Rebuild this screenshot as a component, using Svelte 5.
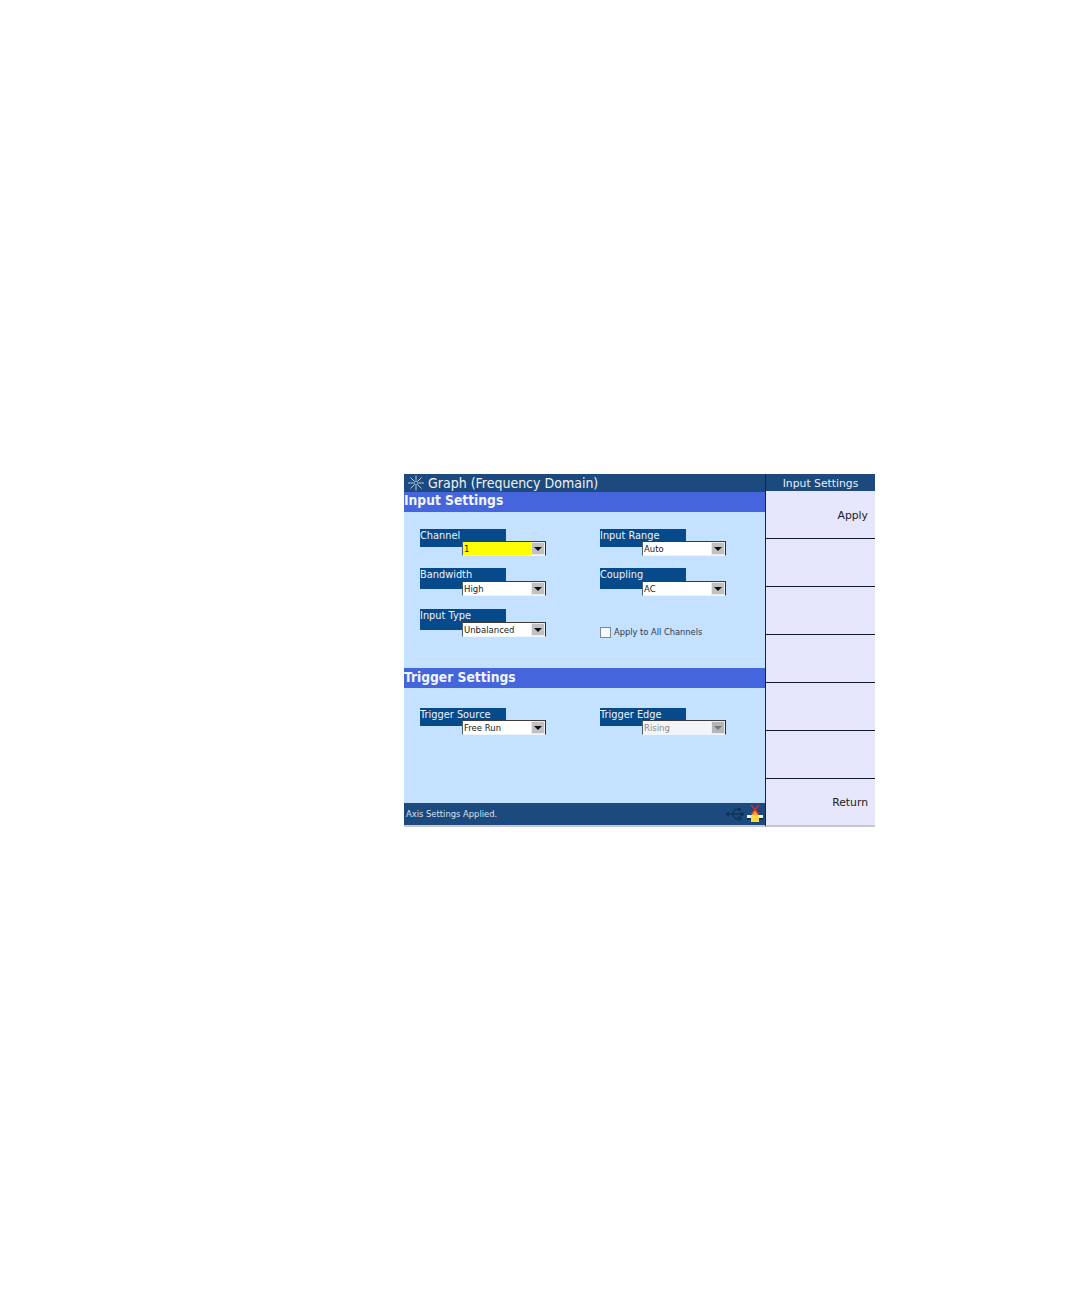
<script lang="ts">
  const softkeys = ["Apply", "", "", "", "", "", "Return"];
</script>

{#snippet field(label, value, cls = "")}
  <div class="field {cls}">
    <div class="field-label">{label}</div>
    <div class="combo">
      <span class="combo-value">{value}</span>
      <span class="combo-btn"><i></i></span>
    </div>
  </div>
{/snippet}

<div class="page">
  <div class="screen">
    <div class="main">
      <div class="titlebar">
        <svg class="logo" width="18" height="16" viewBox="0 0 18 16">
          <circle cx="9" cy="8" r="2" fill="#1c4a7e" stroke="#c9d6e6" stroke-width="0.800" />
          <g stroke="#c9d6e6" stroke-width="0.900" fill="none">
            <path d="M9 0.500v5M9 10.500v5M1 8h5.500M11.500 8h5.500M3.500 2.500l3.500 3.500M14.500 2.500l-3.500 3.500M3.500 13.500l3.500-3.500M14.500 13.500l-3.500-3.500" />
          </g>
        </svg>
        <span>Graph (Frequency Domain)</span>
      </div>

      <div class="section-head">Input Settings</div>
      <div class="section input-section">
        <div class="col">
          {@render field("Channel", "1", "active first")}
          {@render field("Bandwidth", "High", "tall")}
          {@render field("Input Type", "Unbalanced", "tall")}
        </div>
        <div class="col">
          {@render field("Input Range", "Auto", "first")}
          {@render field("Coupling", "AC", "tall")}
          <label class="check">
            <span class="box"></span>
            <span>Apply to All Channels</span>
          </label>
        </div>
      </div>

      <div class="section-head trigger-head">Trigger Settings</div>
      <div class="section trigger-section">
        <div class="col">
          {@render field("Trigger Source", "Free Run", "first")}
        </div>
        <div class="col">
          {@render field("Trigger Edge", "Rising", "first disabled")}
        </div>
      </div>

      <div class="statusbar">
        <span class="status-text">Axis Settings Applied.</span>
        <svg class="usb" width="20" height="14" viewBox="0 0 20 14">
          <g fill="none" stroke="#0f3358" stroke-width="1.300">
            <path d="M3 7h13M7 7l3-4.500h3M7 7l3 4.500h2.500" />
            <circle cx="14.500" cy="11.500" r="1.600" />
          </g>
          <circle cx="17" cy="7" r="2" fill="#0f3358" />
          <path d="M0 7l4-2.500v5z" fill="#0f3358" />
          <rect x="13" y="1" width="3" height="3" fill="#0f3358" />
        </svg>
        <svg class="warn" width="18" height="20" viewBox="0 0 18 20">
          <path d="M9 5l4 7H5z" fill="#f0a030" />
          <rect x="1" y="11" width="16" height="3" fill="#f4f4f4" />
          <rect x="1" y="14" width="16" height="1.500" fill="#10263e" />
          <rect x="5" y="11" width="8" height="7" fill="#f6dc3c" />
          <path d="M5 1l8 9M13 1l-8 9" stroke="#c83030" stroke-width="1.600" />
        </svg>
      </div>
      <div class="bottom-edge"></div>
    </div>

    <div class="softkeys">
      <div class="softkeys-head">Input Settings</div>
      {#each softkeys as key}
        <div class="softkey">{key}</div>
      {/each}
    </div>
  </div>
</div>

<style>
  :global(body) {
    margin: 0;
    background: #fff;
  }

  .page {
    height: 1296px;
    box-sizing: border-box;
    padding: 474px 0 0 404px;
    font-family: "DejaVu Sans", Verdana, sans-serif;
  }

  .screen {
    display: flex;
    width: 471px;
    height: 353px;
  }

  .main {
    width: 361px;
    flex: none;
    display: flex;
    flex-direction: column;
    background: #c4e1ff;
  }

  .titlebar {
    height: 18px;
    flex: none;
    display: flex;
    align-items: center;
    gap: 3px;
    padding-left: 3px;
    background: #1c4a7e;
    color: #eef3f8;
    font-size: 14px;
    font-stretch: condensed;
    white-space: nowrap;
  }

  .logo {
    flex: none;
  }

  .section-head {
    height: 20px;
    flex: none;
    background: #4565dc;
    color: #f2f5ff;
    font-size: 13.700px;
    font-stretch: condensed;
    font-weight: 700;
    line-height: 17px;
  }

  .trigger-head {
    line-height: 19px;
  }

  .section {
    display: flex;
    padding-left: 16px;
    flex: none;
  }

  .input-section {
    height: 156px;
    padding-top: 17px;
    box-sizing: border-box;
  }

  .trigger-section {
    height: 115px;
    padding-top: 20px;
    box-sizing: border-box;
  }

  .col {
    width: 180px;
    flex: none;
    display: flex;
    flex-direction: column;
  }

  .field {
    position: relative;
    height: 41px;
  }

  .field.first {
    height: 39px;
  }

  .field-label {
    width: 86px;
    height: 21px;
    box-sizing: border-box;
    background: #064a8c;
    color: #eef4fa;
    font-size: 9.800px;
    line-height: 14px;
    white-space: nowrap;
  }

  .first .field-label {
    height: 18px;
  }

  .combo {
    position: absolute;
    left: 42px;
    top: 13px;
    width: 84px;
    height: 15px;
    box-sizing: border-box;
    display: flex;
    justify-content: space-between;
    background: #fff;
    border-top: 1px solid #3a3a3a;
    border-left: 1px solid #44607c;
    border-right: 1px solid #2c2c2c;
    border-bottom: 1px solid #eef4fb;
    color: #1a1a1a;
    font-size: 8.500px;
    line-height: 14px;
  }

  .first .combo {
    top: 12px;
  }

  .combo-value {
    padding-left: 1px;
  }

  .combo-btn {
    width: 14px;
    flex: none;
    display: flex;
    align-items: center;
    justify-content: center;
    background: #c0c0c0;
    border: 1px solid #ececec;
    box-sizing: border-box;
  }

  .combo-btn i {
    width: 0;
    height: 0;
    border-left: 4px solid transparent;
    border-right: 4px solid transparent;
    border-top: 4px solid #111;
  }

  .active .combo {
    background: linear-gradient(to right, #ffff00 69px, #fff 69px);
  }

  .disabled .combo {
    background: #f2f4f7;
    color: #8a8a8a;
  }

  .disabled .combo-btn {
    background: #b4b6ba;
  }

  .disabled .combo-btn i {
    border-top-color: #777;
  }

  .check {
    display: flex;
    align-items: center;
    gap: 3px;
    height: 16px;
    margin-top: 15px;
    color: #2a3a4a;
    font-size: 8.300px;
    white-space: nowrap;
  }

  .box {
    width: 11px;
    height: 11px;
    flex: none;
    box-sizing: border-box;
    background: #f8f8f8;
    border: 1px solid #7d8894;
  }

  .statusbar {
    height: 22px;
    flex: none;
    display: flex;
    align-items: center;
    padding-left: 2px;
    background: #1c4a7e;
    color: #d6e2ee;
    font-size: 8.400px;
  }

  .status-text {
    flex: 1;
  }

  .usb {
    margin-right: 1px;
  }

  .warn {
    margin-right: 1px;
  }

  .bottom-edge {
    height: 2px;
    flex: none;
    margin-top: auto;
    background: #c8c8c8;
  }

  .softkeys {
    width: 110px;
    flex: none;
    display: flex;
    flex-direction: column;
    background: #e6e6fc;
    border-left: 1px solid #10263e;
    box-sizing: border-box;
    border-bottom: 2px solid #c8c8c8;
  }

  .softkeys-head {
    height: 17px;
    flex: none;
    background: #1c4a7e;
    color: #e8f0f8;
    font-size: 10.800px;
    line-height: 19px;
    text-align: center;
  }

  .softkey {
    height: 48px;
    flex: none;
    box-sizing: border-box;
    padding: 18px 7px 0 0;
    border-bottom: 1px solid #0a1a30;
    color: #1a1a1a;
    font-size: 10.800px;
    line-height: 14px;
    text-align: right;
  }

  .softkey:last-child {
    border-bottom: none;
    padding-top: 17px;
  }
</style>
